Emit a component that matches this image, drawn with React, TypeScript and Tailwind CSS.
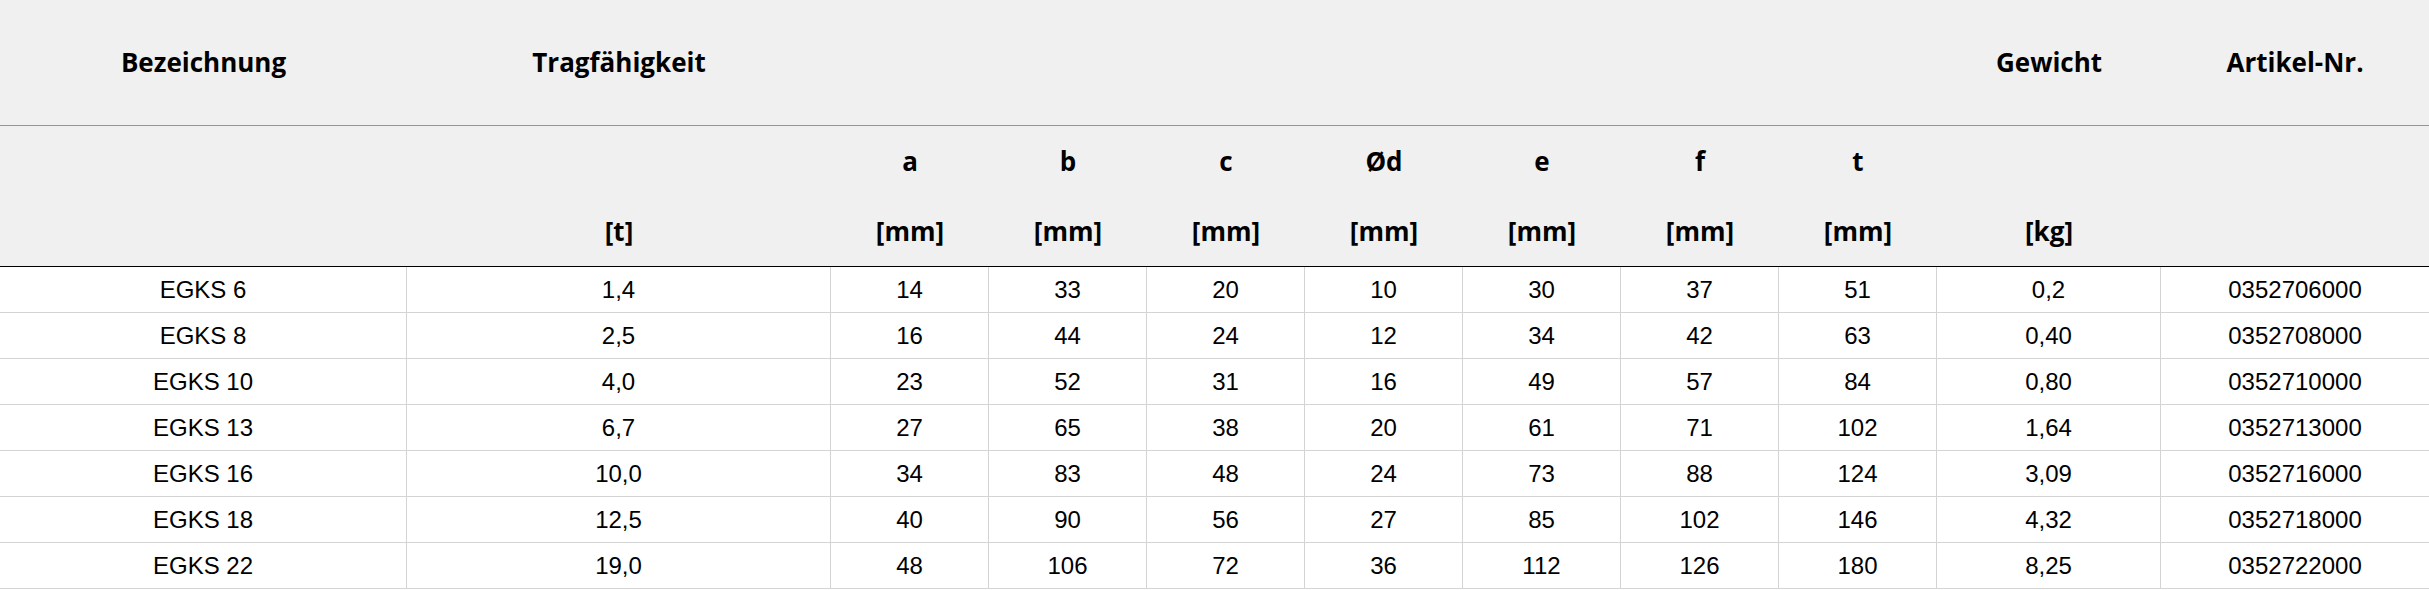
import React from "react";

type Row = {
  name: string;
  load: string;
  a: string;
  b: string;
  c: string;
  d: string;
  e: string;
  f: string;
  t: string;
  weight: string;
  art: string;
};

const rows: Row[] = [
  { name: "EGKS 6", load: "1,4", a: "14", b: "33", c: "20", d: "10", e: "30", f: "37", t: "51", weight: "0,2", art: "0352706000" },
  { name: "EGKS 8", load: "2,5", a: "16", b: "44", c: "24", d: "12", e: "34", f: "42", t: "63", weight: "0,40", art: "0352708000" },
  { name: "EGKS 10", load: "4,0", a: "23", b: "52", c: "31", d: "16", e: "49", f: "57", t: "84", weight: "0,80", art: "0352710000" },
  { name: "EGKS 13", load: "6,7", a: "27", b: "65", c: "38", d: "20", e: "61", f: "71", t: "102", weight: "1,64", art: "0352713000" },
  { name: "EGKS 16", load: "10,0", a: "34", b: "83", c: "48", d: "24", e: "73", f: "88", t: "124", weight: "3,09", art: "0352716000" },
  { name: "EGKS 18", load: "12,5", a: "40", b: "90", c: "56", d: "27", e: "85", f: "102", t: "146", weight: "4,32", art: "0352718000" },
  { name: "EGKS 22", load: "19,0", a: "48", b: "106", c: "72", d: "36", e: "112", f: "126", t: "180", weight: "8,25", art: "0352722000" },
];

// top header line, dimension letters + units
const heads: { top: string; sym: string; unit: string }[] = [
  { top: "Bezeichnung", sym: "", unit: "" },
  { top: "Tragfähigkeit", sym: "", unit: "[t]" },
  { top: "", sym: "a", unit: "[mm]" },
  { top: "", sym: "b", unit: "[mm]" },
  { top: "", sym: "c", unit: "[mm]" },
  { top: "", sym: "Ød", unit: "[mm]" },
  { top: "", sym: "e", unit: "[mm]" },
  { top: "", sym: "f", unit: "[mm]" },
  { top: "", sym: "t", unit: "[mm]" },
  { top: "Gewicht", sym: "", unit: "[kg]" },
  { top: "Artikel-Nr.", sym: "", unit: "" },
];

const cols =
  "grid grid-cols-[407px_424px_158px_158px_158px_158px_158px_158px_158px_224px_1fr]";

export default function App() {
  return (
    <div className="w-full overflow-hidden bg-white">
      <div className="w-full">
        <div className="bg-[#f0f0f0] font-['Open_Sans',sans-serif] text-[26px] font-bold text-black">
          <div className={`${cols} h-[126px] border-b border-[#959595]`}>
            {heads.map((h, i) => (
              <div key={i} className="flex items-center justify-center">
                {h.top}
              </div>
            ))}
          </div>
          <div className={`${cols} h-[141px] border-b border-black pb-[4px]`}>
            {heads.map((h, i) => (
              <div key={i} className="flex flex-col justify-center text-center leading-[70px]">
                <div className="h-[70px]">{h.sym}</div>
                <div className="h-[70px]">{h.unit}</div>
              </div>
            ))}
          </div>
        </div>
        <div className="font-['Liberation_Sans',Arial,sans-serif] text-[24px] text-black">
          {rows.map((r) => {
            const cells = [r.name, r.load, r.a, r.b, r.c, r.d, r.e, r.f, r.t, r.weight, r.art];
            return (
              <div key={r.art} className={`${cols} h-[46px] border-b border-[#d4d4d4]`}>
                {cells.map((c, i) => (
                  <div
                    key={i}
                    className="flex items-center justify-center border-r border-[#d4d4d4] pt-[1px] last:border-r-0"
                  >
                    {c}
                  </div>
                ))}
              </div>
            );
          })}
        </div>
      </div>
    </div>
  );
}
